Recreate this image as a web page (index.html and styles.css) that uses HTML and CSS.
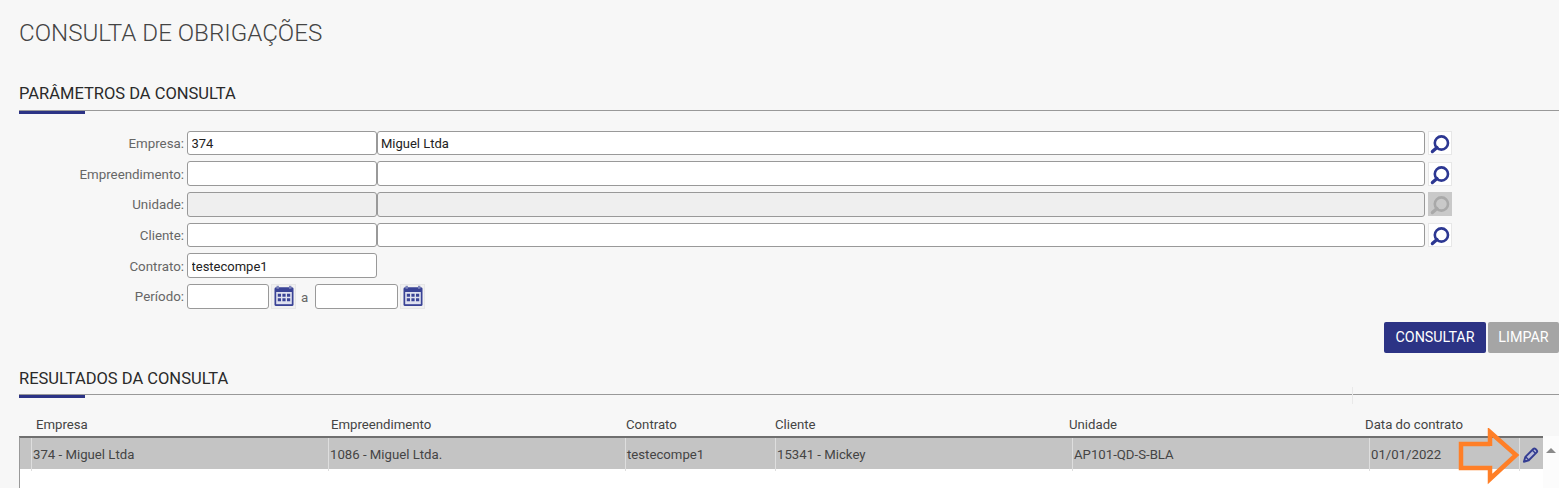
FILE: index.html
```html
<!DOCTYPE html>
<html lang="pt-BR">
<head>
<meta charset="utf-8">
<title>Consulta de Obrigações</title>
<link rel="stylesheet" href="styles.css">
</head>
<body>
<svg class="defs" width="0" height="0" aria-hidden="true">
  <symbol id="lupa" viewBox="0 0 24 24">
    <circle cx="13.4" cy="12" r="6.6" fill="none" stroke="currentColor" stroke-width="2.6"/>
    <path d="M9 16.6 L4.4 20.6" fill="none" stroke="currentColor" stroke-width="3.3" stroke-linecap="round"/>
  </symbol>
  <symbol id="cal" viewBox="0 0 25 25">
    <rect x="3.5" y="3.2" width="19" height="18.8" rx="1.5" fill="#3a4396"/>
    <rect x="5.5" y="1.8" width="2.4" height="3" fill="#7d84bb"/>
    <rect x="18" y="1.8" width="2.4" height="3" fill="#7d84bb"/>
    <rect x="5.2" y="8" width="15.6" height="12.2" fill="#dfe1ef"/>
    <path d="M6.8 9.8h3.2v3H6.8zM11.4 9.8h3.2v3h-3.2zM16 9.8h3.2v3H16zM6.8 14.3h3.2v3H6.8zM11.4 14.3h3.2v3h-3.2zM16 14.3h3.2v3H16z" fill="#3a4396"/>
  </symbol>
</svg>

<main class="pagina">
  <h1 class="titulo">CONSULTA DE OBRIGAÇÕES</h1>

  <h2 class="secao secao-parametros">PARÂMETROS DA CONSULTA</h2>

  <form class="form">
    <div class="linha">
      <label class="rotulo">Empresa:</label>
      <input class="campo campo-cod" value="374">
      <input class="campo campo-nome" value="Miguel Ltda">
      <button type="button" class="btn-icone"><svg class="ico-lupa"><use href="#lupa"/></svg></button>
    </div>
    <div class="linha">
      <label class="rotulo">Empreendimento:</label>
      <input class="campo campo-cod">
      <input class="campo campo-nome">
      <button type="button" class="btn-icone"><svg class="ico-lupa"><use href="#lupa"/></svg></button>
    </div>
    <div class="linha">
      <label class="rotulo">Unidade:</label>
      <input class="campo campo-cod" disabled>
      <input class="campo campo-nome" disabled>
      <button type="button" class="btn-icone btn-inativo"><svg class="ico-lupa"><use href="#lupa"/></svg></button>
    </div>
    <div class="linha">
      <label class="rotulo">Cliente:</label>
      <input class="campo campo-cod">
      <input class="campo campo-nome">
      <button type="button" class="btn-icone"><svg class="ico-lupa"><use href="#lupa"/></svg></button>
    </div>
    <div class="linha">
      <label class="rotulo">Contrato:</label>
      <input class="campo campo-cod" value="testecompe1">
    </div>
    <div class="linha">
      <label class="rotulo">Período:</label>
      <input class="campo campo-data">
      <button type="button" class="btn-icone btn-cal"><svg class="ico-cal"><use href="#cal"/></svg></button>
      <span class="ate">a</span>
      <input class="campo campo-data campo-data-fim">
      <button type="button" class="btn-icone btn-cal"><svg class="ico-cal"><use href="#cal"/></svg></button>
    </div>
  </form>

  <div class="acoes">
    <button type="button" class="btn btn-primario">CONSULTAR</button>
    <button type="button" class="btn btn-limpar">LIMPAR</button>
  </div>

  <h2 class="secao secao-resultados">RESULTADOS DA CONSULTA</h2>

  <div class="cabecalho">
    <span>Empresa</span>
    <span>Empreendimento</span>
    <span>Contrato</span>
    <span>Cliente</span>
    <span>Unidade</span>
    <span>Data do contrato</span>
  </div>

  <div class="grade">
    <div class="corpo">
      <div class="registro">
        <span class="celula"></span>
        <span class="celula">374 - Miguel Ltda</span>
        <span class="celula">1086 - Miguel Ltda.</span>
        <span class="celula">testecompe1</span>
        <span class="celula">15341 - Mickey</span>
        <span class="celula">AP101-QD-S-BLA</span>
        <span class="celula">01/01/2022</span>
        <span class="celula celula-acao">
          <svg class="ico-lapis" viewBox="0 0 16 16">
            <path d="M3.2 10.2 L10.6 2.8 Q11.6 1.8 12.7 2.8 L13.8 3.9 Q14.8 5 13.8 6 L6.4 13.4 L1.8 14.8 Z" fill="#b9bcd8" stroke="#343d92" stroke-width="1.8" stroke-linejoin="round"/>
            <path d="M3.4 10.2 L6.4 13.2 M9.6 3.8 L12.8 7" fill="none" stroke="#343d92" stroke-width="1.3"/>
          </svg>
        </span>
      </div>
    </div>
    <div class="rolagem"><span class="seta-cima"></span></div>
  </div>
</main>

<span class="cursor-texto" aria-hidden="true"></span>

<svg class="marca-seta" width="70" height="62" viewBox="0 0 70 62" aria-hidden="true">
  <path d="M32 18 V4 L58 27 L32 51 V40 H3 V16 H32" fill="none" stroke="#ff7f27" stroke-width="4.5" stroke-linejoin="miter"/>
</svg>
</body>
</html>
```
FILE: styles.css
```css
* { box-sizing: border-box; }

html, body {
  margin: 0;
  height: 488px;
  overflow: hidden;
  background: #f7f7f7;
  font-family: Roboto, "Liberation Sans", sans-serif;
}

.defs { position: absolute; }

.pagina {
  padding: 19px 0 0 19px;
  height: 488px;
  overflow: hidden;
}

.titulo {
  margin: 0;
  font-size: 24.15px;
  line-height: 28px;
  font-weight: 300;
  color: #444;
}

.secao {
  margin: 0;
  font-size: 16.5px;
  line-height: 19px;
  font-weight: 400;
  color: #2a2a2a;
  border-bottom: 1px solid #999;
  position: relative;
}

.secao::after {
  content: "";
  position: absolute;
  left: 0;
  bottom: -4px;
  width: 66px;
  height: 3px;
  background: #2c3385;
}

.secao-parametros {
  margin-top: 37px;
  height: 27px;
}

.secao-resultados {
  margin-top: 16px;
  height: 26px;
}

.form {
  margin-top: 19.7px;
  display: flex;
  flex-direction: column;
  gap: 6.2px;
}

.linha {
  display: flex;
  align-items: center;
  height: 24.5px;
}

.rotulo {
  width: 165px;
  margin-right: 3px;
  padding-top: 1px;
  text-align: right;
  font-size: 13.33px;
  color: #666;
}

.campo {
  height: 100%;
  padding: 1px 3px 0;
  border: 1px solid #999;
  border-radius: 3px;
  background: #fff;
  font-family: inherit;
  font-size: 13px;
  color: #222;
  outline: none;
}

.campo:disabled { background: #efefef; }
.campo-cod { width: 190px; padding-left: 3.5px; }
.campo-nome { width: 1048px; }
.campo-data { width: 82px; }
.campo-data-fim { width: 83px; }

.btn-icone {
  display: flex;
  align-items: center;
  justify-content: center;
  width: 24px;
  height: 24px;
  margin-left: 3px;
  padding: 0;
  border: 1px solid #e7e7e7;
  background: #fff;
  color: #2c3792;
}

.btn-inativo {
  background: #c9c9c9;
  border-color: #c9c9c9;
  color: #a9a9a9;
}

.btn-cal {
  width: 25px;
  height: 25px;
  margin-left: 2px;
  background: #f1f1f1;
}

.ico-lupa { width: 24px; height: 24px; flex: none; }
.ico-cal { width: 25px; height: 25px; flex: none; }

.ate {
  width: 19px;
  padding: 2px 0 0 5px;
  font-size: 13.33px;
  color: #666;
}

.acoes {
  display: flex;
  justify-content: flex-end;
  gap: 2px;
  margin-top: 13.3px;
}

.btn {
  height: 31px;
  border: 0;
  border-radius: 2px;
  font-family: inherit;
  font-size: 14.3px;
  color: #fff;
  padding: 0;
}

.btn-primario { width: 102px; background: #2c3385; }
.btn-limpar { width: 71px; background: #a5a5a5; }

.cabecalho {
  display: grid;
  grid-template-columns: 295px 295px 149px 294px 296px auto;
  padding-left: 17px;
  margin-top: 21px;
  height: 20px;
  font-size: 13.2px;
  line-height: 17px;
  color: #444;
}

.grade {
  display: flex;
  height: 52px;
}

.corpo {
  width: 1524px;
  background: #fff;
  border-top: 2px solid #6f6f6f;
  border-left: 1px solid #999;
}

.registro {
  display: grid;
  grid-template-columns: 12px 297px 297px 150px 297px 297px 150px 23px;
  height: 31px;
  background: #c4c4c4;
  font-size: 13.2px;
  line-height: 33px;
  color: #444;
}

.celula {
  border-right: 1px solid #dedede;
  padding-left: 1px;
  white-space: nowrap;
}

.celula:first-child { padding-left: 0; }
.celula-acao { display: flex; align-items: center; border-right: 0; }
.ico-lapis { width: 17px; height: 17px; margin-left: 1px; }

.rolagem {
  flex: 1;
  background: #fcfcfc;
  display: flex;
  justify-content: center;
  padding-top: 12px;
}

.seta-cima {
  width: 0;
  height: 0;
  border-left: 5px solid transparent;
  border-right: 5px solid transparent;
  border-bottom: 5px solid #8a8a8a;
}

.cursor-texto {
  position: absolute;
  left: 1352px;
  top: 387px;
  width: 1px;
  height: 17px;
  background: #e9e9e9;
}

.marca-seta {
  position: absolute;
  left: 1458px;
  top: 428px;
}
```
